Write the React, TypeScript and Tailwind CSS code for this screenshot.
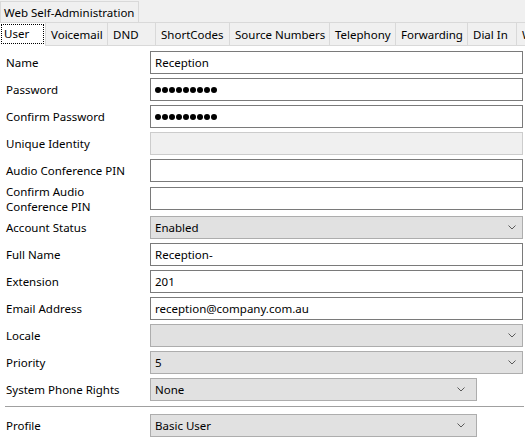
import React from "react";

const font = { fontFamily: '"Noto Sans", "Open Sans", sans-serif' };

function Chevron() {
  return (
    <svg width="8" height="5" viewBox="0 0 8 5" className="block">
      <path d="M0.5 0.5 L4 4 L7.5 0.5" fill="none" stroke="#5a5a5a" strokeWidth="1" />
    </svg>
  );
}

function TextBox({ value, disabled }: { value?: string; disabled?: boolean }) {
  return (
    <div
      className={
        "w-[373px] h-[23px] flex items-center pl-[4px] text-[11.5px] text-black " +
        (disabled ? "bg-[#f0f0f0] border border-[#cccccc]" : "bg-white border border-[#7a7a7a]")
      }
    >
      {value}
    </div>
  );
}

function Password() {
  return (
    <div className="w-[373px] h-[23px] flex items-center pl-[4px] bg-white border border-[#7a7a7a] gap-[1px]">
      {Array.from({ length: 9 }).map((_, i) => (
        <span key={i} className="w-[6px] h-[6px] rounded-full bg-black" />
      ))}
    </div>
  );
}

function Select({ value, narrow }: { value?: string; narrow?: boolean }) {
  return (
    <div
      className={
        "h-[23px] flex items-center justify-between pl-[4px] bg-[#e1e1e1] border border-[#adadad] text-[11.5px] text-black " +
        (narrow ? "w-[327px] pr-[11px]" : "w-[373px] pr-[6px]")
      }
    >
      <span>{value}</span>
      <Chevron />
    </div>
  );
}

function Row({ label, children, className }: { label: React.ReactNode; children: React.ReactNode; className?: string }) {
  return (
    <div className={"flex items-center h-[23px] " + (className ?? "")}>
      <div className="w-[150px] shrink-0 pl-[6px] text-[11.5px] leading-[15px] text-black">{label}</div>
      {children}
    </div>
  );
}

const tabs: { name: string; w: string }[] = [
  { name: "Voicemail", w: "w-[62px]" },
  { name: "DND", w: "w-[48px]" },
  { name: "ShortCodes", w: "w-[74px]" },
  { name: "Source Numbers", w: "w-[100px]" },
  { name: "Telephony", w: "w-[66px]" },
  { name: "Forwarding", w: "w-[72px]" },
  { name: "Dial In", w: "w-[49px]" },
  { name: "Web", w: "w-[40px]" },
];

export default function App() {
  return (
    <div className="w-[525px] h-[440px] bg-white overflow-hidden text-black" style={font}>
      <div className="bg-[#f0f0f0] h-[22px] flex items-end">
        <div className="w-[139px] h-[21px] border border-b-0 border-[#d9d9d9] pl-[3px] text-[11.5px] leading-[21px] whitespace-nowrap">
          Web Self-Administration
        </div>
      </div>
      <div className="flex h-[24px] bg-[#f0f0f0] border-t border-[#d9d9d9] overflow-hidden">
        <div className="w-[45px] h-[24px] bg-white p-[1px] shrink-0">
          <div className="w-[43px] h-[20px] border border-dotted border-black pl-[2px] text-[11.5px] leading-[18px]">User</div>
        </div>
        <div className="flex flex-1 border-b border-[#d9d9d9] h-[23px] overflow-hidden">
          {tabs.map((t) => (
            <div
              key={t.name}
              className={t.w + " shrink-0 h-[22px] border-l border-[#d9d9d9] pl-[5px] text-[11.5px] leading-[23px] whitespace-nowrap overflow-hidden"}
            >
              {t.name}
            </div>
          ))}
        </div>
      </div>
      <div className="flex flex-col pt-[5px]">
        <div className="flex flex-col gap-[4px]">
          <Row label="Name"><TextBox value="Reception" /></Row>
          <Row label="Password"><Password /></Row>
          <Row label="Confirm Password"><Password /></Row>
          <Row label="Unique Identity"><TextBox disabled /></Row>
          <Row label="Audio Conference PIN"><TextBox /></Row>
          <Row label={<>Confirm Audio<br />Conference PIN</>} className="mt-[1px]"><TextBox /></Row>
          <Row label="Account Status" className="mt-[2px]"><Select value="Enabled" /></Row>
          <Row label="Full Name"><TextBox value="Reception-" /></Row>
          <Row label="Extension"><TextBox value="201" /></Row>
          <Row label="Email Address"><TextBox value="reception@company.com.au" /></Row>
          <Row label="Locale"><Select /></Row>
          <Row label="Priority"><Select value="5" /></Row>
          <Row label="System Phone Rights"><Select value="None" narrow /></Row>
        </div>
        <div className="ml-[5px] mr-[1px] mt-[5px] h-px bg-[#a0a0a0]" />
        <Row label="Profile" className="mt-[7px]"><Select value="Basic User" narrow /></Row>
      </div>
    </div>
  );
}
